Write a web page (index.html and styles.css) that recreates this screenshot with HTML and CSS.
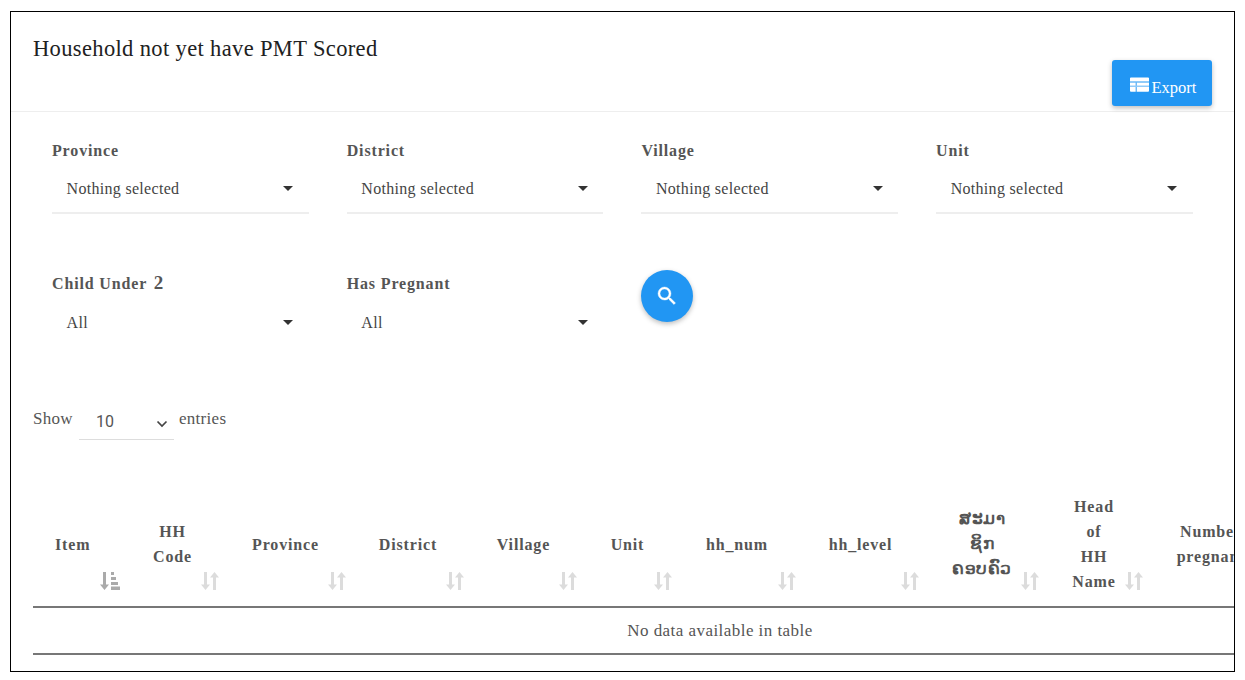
FILE: index.html
```html
<!DOCTYPE html>
<html lang="en">
<head>
<meta charset="utf-8">
<title>Household not yet have PMT Scored</title>
<link rel="stylesheet" href="styles.css">
</head>
<body>
<svg class="defs" width="0" height="0" aria-hidden="true">
  <symbol id="sort" viewBox="0 0 18 20"><path d="M3 1h3v12.500h3L4.500 19 0 13.500h3zM12 19V6.500H9L13.500 1 18 6.500h-3V19z"/></symbol>
  <symbol id="sorted" viewBox="0 0 20 20"><path d="M3 1h3v12.500h3L4.500 19 0 13.500h3zM11 1h3v3h-3zM11 6h5v3h-5zM11 11h7v3h-7zM11 15.500h9v3.500h-9z"/></symbol>
</svg>
<main class="frame">
  <header class="head">
    <h1 class="title">Household not yet have PMT Scored</h1>
    <button class="export"><svg class="export-icon" viewBox="0 0 20 15"><path d="M1 0h18a1 1 0 0 1 1 1v13a1 1 0 0 1-1 1H1a1 1 0 0 1-1-1V1a1 1 0 0 1 1-1zM0 4.300v1h20v-1zM0 8.700v1h20v-1zM6 5v10h1V5z" fill-rule="evenodd"/></svg>Export</button>
  </header>
  <section class="filters">
    <div class="field"><label class="label">Province</label><div class="select lined"><span>Nothing selected</span><i class="caret"></i></div></div>
    <div class="field"><label class="label">District</label><div class="select lined"><span>Nothing selected</span><i class="caret"></i></div></div>
    <div class="field"><label class="label">Village</label><div class="select lined"><span>Nothing selected</span><i class="caret"></i></div></div>
    <div class="field"><label class="label">Unit</label><div class="select lined"><span>Nothing selected</span><i class="caret"></i></div></div>
    <div class="field"><label class="label">Child Under <span class="digit">2</span></label><div class="select"><span>All</span><i class="caret"></i></div></div>
    <div class="field"><label class="label">Has Pregnant</label><div class="select"><span>All</span><i class="caret"></i></div></div>
    <div class="field"><button class="search" aria-label="Search"><svg viewBox="0 0 24 24" class="search-icon"><path d="M15.500 14h-.79l-.28-.27A6.470 6.470 0 0 0 16 9.500 6.500 6.500 0 1 0 9.500 16c1.610 0 3.090-.59 4.230-1.570l.27.28v.79l5 4.990L20.490 19l-4.990-5zm-6 0C7.010 14 5 11.990 5 9.500S7.010 5 9.500 5 14 7.010 14 9.500 11.990 14 9.500 14z"/></svg></button></div>
  </section>
  <div class="length">
    <span>Show</span>
    <div class="length-select"><span>10</span><svg class="chev" viewBox="0 0 12 8"><path d="M1.500 1.500 6 6l4.500-4.500" fill="none" stroke-width="1.700"/></svg></div>
    <span>entries</span>
  </div>
  <div class="table-wrap">
    <table class="table">
      <colgroup>
        <col class="c1"><col class="c2"><col class="c3"><col class="c4"><col class="c5"><col class="c6"><col class="c7"><col class="c8"><col class="c9"><col class="c10"><col class="c11"><col class="c12">
      </colgroup>
      <thead>
        <tr>
          <th class="first">Item<svg class="sort on"><use href="#sorted"/></svg></th>
          <th>HH<br>Code<svg class="sort"><use href="#sort"/></svg></th>
          <th>Province<svg class="sort"><use href="#sort"/></svg></th>
          <th>District<svg class="sort"><use href="#sort"/></svg></th>
          <th>Village<svg class="sort"><use href="#sort"/></svg></th>
          <th>Unit<svg class="sort"><use href="#sort"/></svg></th>
          <th>hh_num<svg class="sort"><use href="#sort"/></svg></th>
          <th>hh_level<svg class="sort"><use href="#sort"/></svg></th>
          <th lang="lo" class="lao"><span class="lao-text">ສະມາ<br>ຊິກ<br>ຄອບຄົວ</span><svg class="sort"><use href="#sort"/></svg></th>
          <th>Head<br>of<br>HH<br>Name<svg class="sort"><use href="#sort"/></svg></th>
          <th>Number<br>pregnant<svg class="sort"><use href="#sort"/></svg></th>
          <th></th>
        </tr>
      </thead>
      <tbody>
        <tr><td class="empty" colspan="12">No data available in table</td></tr>
      </tbody>
    </table>
  </div>
</main>
</body>
</html>
```

FILE: styles.css
```css
* { box-sizing: border-box; }
html, body { margin: 0; padding: 0; background: #fff; }
body { font-family: "Liberation Serif", "Times New Roman", serif; color: #555; overflow: hidden; height: 680px; }
.defs { position: absolute; }

.frame {
  margin: 11px 10px 0;
  width: 1225px;
  height: 661px;
  border: 1px solid #000;
  overflow: hidden;
  background: #fff;
}

.head {
  height: 100px;
  border-bottom: 1px solid #eee;
  display: flex;
  justify-content: space-between;
  padding: 0 22px 5px 22px;
  align-items: flex-end;
}
.title {
  margin: 0;
  align-self: flex-start;
  padding-top: 24px;
  font-size: 22.500px;
  line-height: 26px;
  font-weight: 400;
  letter-spacing: .36px;
  color: #212121;
}
.export {
  width: 100px;
  height: 46px;
  border: 0;
  border-radius: 3px;
  background: #2196f3;
  color: #fff;
  font: 400 16.500px "Liberation Serif", serif;
  box-shadow: 0 2px 5px rgba(0,0,0,.26);
  padding: 9px 0 0 2px;
  display: flex;
  align-items: center;
  justify-content: center;
}
.export-icon { width: 19px; height: 15px; fill: #fff; margin: -6px 3px 0 0; }

.filters {
  display: grid;
  grid-template-columns: repeat(4, 256.700px);
  grid-auto-rows: 133px;
  column-gap: 38px;
  padding: 29px 0 0 41px;
}
.label {
  display: block;
  font-size: 16px;
  line-height: 20px;
  font-weight: 700;
  letter-spacing: .85px;
  color: #555;
}
.digit { font-size: 19px; line-height: 18px; font-weight: 700; letter-spacing: 0; margin-left: 2px; }
.select {
  height: 46px;
  margin-top: 7px;
  padding: 0 15.500px 2px 14.600px;
  display: flex;
  align-items: center;
  justify-content: space-between;
  font-size: 16px;
  letter-spacing: .3px;
  color: #444;
}
.lined { border-bottom: 2px solid #eee; }
.caret { width: 0; height: 0; border-left: 5px solid transparent; border-right: 5px solid transparent; border-top: 5px solid #333; margin-top: -2px; }
.search {
  width: 52px;
  height: 52px;
  margin-top: -4px;
  border: 0;
  padding: 0;
  border-radius: 50%;
  background: #2196f3;
  box-shadow: 0 2px 5px rgba(0,0,0,.26);
  display: flex;
  align-items: center;
  justify-content: center;
}
.search-icon { width: 24px; height: 24px; fill: #fff; stroke: #fff; stroke-width: .4; }

.length {
  display: flex;
  align-items: flex-start;
  margin: 2px 0 0 22px;
  font-size: 17px;
  line-height: 20px;
  letter-spacing: .3px;
  color: #555;
}
.length-select {
  width: 95px;
  height: 40px;
  margin: -9px 5px 0 6px;
  padding: 12px 6px 0 17px;
  border-bottom: 1px solid #ddd;
  display: flex;
  justify-content: space-between;
  font-family: Roboto, sans-serif;
  font-size: 16px;
  letter-spacing: 0;
  color: #555;
}
.chev { width: 12px; height: 8px; stroke: #444; margin-top: 8px; }

.table-wrap { margin: 42px 0 0 22px; overflow: hidden; }
.table { border-collapse: collapse; table-layout: fixed; width: 1374px; }
.c1 { width: 92px; } .c2 { width: 99px; } .c3 { width: 127px; } .c4 { width: 118px; }
.c5 { width: 113px; } .c6 { width: 95px; } .c7 { width: 124px; } .c8 { width: 123px; }
.c9 { width: 120px; } .c10 { width: 104px; } .c11 { width: 130px; } .c12 { width: 129px; }
th {
  position: relative;
  padding: 12px 22px 12px 18px;
  font-size: 16px;
  line-height: 25px;
  letter-spacing: .85px;
  font-weight: 700;
  text-align: center;
  color: #555;
  border-bottom: 2px solid #777;
}
th.first { text-align: left; padding-left: 22px; }
th.lao { font-size: 17px; letter-spacing: .5px; }
.lao-text { display: block; margin-top: -2px; }
.sort { position: absolute; right: 5px; bottom: 15px; width: 18px; height: 20px; fill: #dcdcdc; }
.sort.on { width: 20px; fill: #aaa; }
td.empty {
  height: 47px;
  padding: 0;
  text-align: center;
  font-size: 17px;
  letter-spacing: .45px;
  color: #555;
  border-bottom: 2px solid #777;
}
```
